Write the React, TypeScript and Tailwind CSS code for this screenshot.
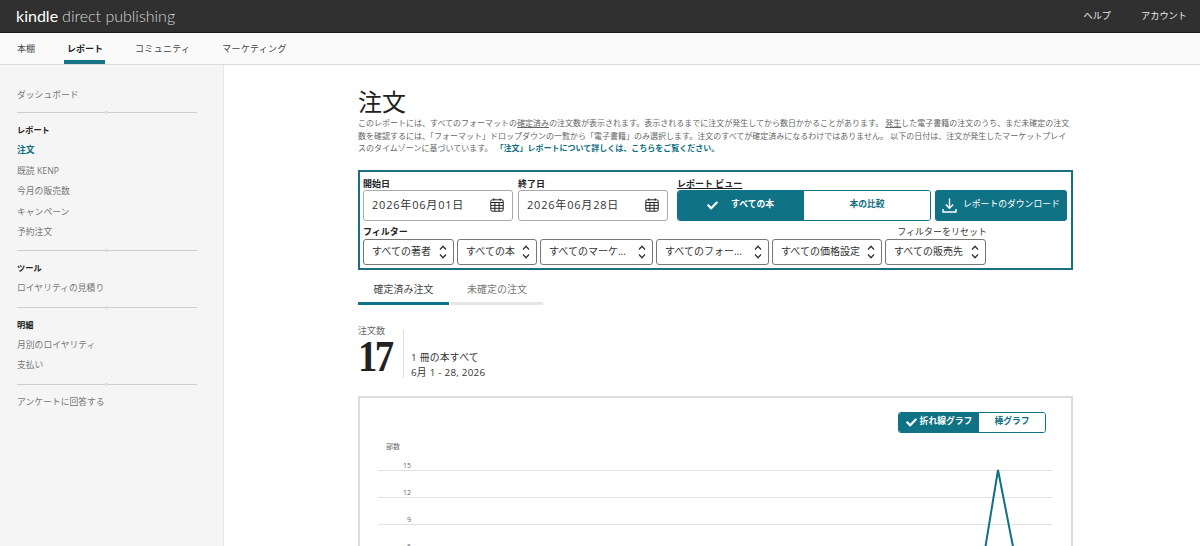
import { FaCheck } from "react-icons/fa";

const FONT = "font-['Open_Sans','Noto_Sans_CJK_JP',sans-serif]";

function SideDivider() {
  return (
    <div className="relative h-px w-[180px] bg-[#cfcfcf]">
      <span className="absolute left-[88px] top-[-1px] h-[3px] w-[3px] rounded-full border border-[#cfcfcf] bg-[#f5f5f5]" />
    </div>
  );
}

function SideHead({ children }: { children: string }) {
  return <div className="h-[20px] text-[8.2px] leading-[20px] font-bold text-[#222]">{children}</div>;
}

function SideItem({ label, active }: { label: string; active?: boolean }) {
  return (
    <div className={`h-[20.4px] text-[8.8px] leading-[20px] ${active ? "font-bold text-[#0f6f80]" : "text-[#777]"}`}>
      {label}
    </div>
  );
}

function Sidebar() {
  return (
    <aside className="w-[224px] shrink-0 border-r border-[#e6e6e6] bg-[#f5f5f5] pl-[17px] pt-[19px]">
      <div className="pt-[1px]"><SideItem label="ダッシュボード" /></div>
      <div className="mt-[7px] mb-[7px]"><SideDivider /></div>
      <SideHead>レポート</SideHead>
      <SideItem label="注文" active />
      <SideItem label="既読 KENP" />
      <SideItem label="今月の販売数" />
      <SideItem label="キャンペーン" />
      <SideItem label="予約注文" />
      <div className="mt-[8px] mb-[7px]"><SideDivider /></div>
      <SideHead>ツール</SideHead>
      <SideItem label="ロイヤリティの見積り" />
      <div className="mt-[8px] mb-[7px]"><SideDivider /></div>
      <SideHead>明細</SideHead>
      <SideItem label="月別のロイヤリティ" />
      <SideItem label="支払い" />
      <div className="mt-[8px] mb-[7px]"><SideDivider /></div>
      <SideItem label="アンケートに回答する" />
    </aside>
  );
}

function CalendarIcon() {
  return (
    <svg width="14" height="14" viewBox="0 0 14 14" fill="none" stroke="#222" strokeWidth="1" className="shrink-0">
      <rect x="0.8" y="1.8" width="12.4" height="11.4" rx="1.5" />
      <path d="M0.8 4.5h12.4M0.8 7.4h12.4M0.8 10.3h12.4M4.9 4.5v8.7M9.1 4.5v8.7" />
      <path d="M3.8 0.5v2M10.2 0.5v2" strokeWidth="1.3" />
    </svg>
  );
}

function UpDownIcon() {
  return (
    <svg width="8" height="14" viewBox="0 0 8 14" fill="none" stroke="#333" strokeWidth="1.3" className="shrink-0">
      <path d="M1 4.5 L4 1.2 L7 4.5" />
      <path d="M1 9.5 L4 12.8 L7 9.5" />
    </svg>
  );
}

function DownloadIcon() {
  return (
    <svg width="15" height="15" viewBox="0 0 15 15" fill="none" stroke="#fff" strokeWidth="1.4" className="shrink-0">
      <path d="M7.5 0.5V10M3.8 6.5 L7.5 10.2 L11.2 6.5" />
      <path d="M1 11v3h13v-3" />
    </svg>
  );
}

function DateField({ label, value }: { label: string; value: string }) {
  return (
    <div className="w-[150px]">
      <div className="h-[13px] text-[9px] leading-[13px] font-bold text-[#222]">{label}</div>
      <div className="flex h-[31px] items-center justify-between rounded-[3px] border border-[#a9a9a9] bg-white pl-[8px] pr-[8px]">
        <span className="text-[11px] tracking-[0.8px] text-[#333]">{value}</span>
        <CalendarIcon />
      </div>
    </div>
  );
}

function FilterSelect({ label, width }: { label: string; width: string }) {
  return (
    <div className={`flex h-[26px] items-center justify-between rounded-[3px] border border-[#777] bg-white pl-[8px] pr-[6px] ${width}`}>
      <span className="whitespace-nowrap text-[10px] text-[#333]">{label}</span>
      <UpDownIcon />
    </div>
  );
}

function ReportControls() {
  return (
    <div className="mt-[15px] h-[100px] w-[715px] border-2 border-[#1a6f85] pl-[3px] pt-[5px]">
      <div className="flex h-[47px]">
        <DateField label="開始日" value="2026年06月01日" />
        <div className="ml-[5px]"><DateField label="終了日" value="2026年06月28日" /></div>
        <div className="ml-[9px] w-[254px]">
          <div className="h-[13px] text-[9px] leading-[13px] font-bold text-[#222] underline">レポート ビュー</div>
          <div className="flex h-[31px] overflow-hidden rounded-[3px] border border-[#0f7285]">
            <div className="flex w-[126px] items-center bg-[#0f7285] pl-[29px] text-white">
              <FaCheck size={11} />
              <span className="ml-[13px] text-[8.8px] font-bold">すべての本</span>
            </div>
            <div className="flex flex-1 items-center justify-center bg-white text-[8.8px] font-bold text-[#0f6f80]">本の比較</div>
          </div>
        </div>
        <div className="ml-[4px] mt-[13px] flex h-[31px] w-[132px] items-center rounded-[3px] bg-[#0f7285] pl-[7px] text-white">
          <DownloadIcon />
          <span className="ml-[6px] text-[8.8px]">レポートのダウンロード</span>
        </div>
      </div>
      <div className="mt-[2px] flex h-[12px] w-[624px] items-center justify-between text-[9px] leading-[12px]">
        <span className="font-bold text-[#222]">フィルター</span>
        <span className="text-[#333]">フィルターをリセット</span>
      </div>
      <div className="mt-[1px] flex gap-[3px]">
        <FilterSelect label="すべての著者" width="w-[91px]" />
        <FilterSelect label="すべての本" width="w-[80px]" />
        <FilterSelect label="すべてのマーケ..." width="w-[113px]" />
        <FilterSelect label="すべてのフォー..." width="w-[113px]" />
        <FilterSelect label="すべての価格設定" width="w-[110px]" />
        <FilterSelect label="すべての販売先" width="w-[101px]" />
      </div>
    </div>
  );
}

function GridRow({ value }: { value: string }) {
  return (
    <div className="h-[27.2px] border-b border-[#e2e2e2] pt-[17px] pr-[641px] text-right text-[7px] leading-[10px] text-[#666]">
      {value}
    </div>
  );
}

function Chart() {
  return (
    <div className="relative mt-[18px] h-[200px] w-[715px] border-2 border-[#dcdcdc] bg-white">
      <div className="flex justify-end pr-[25px] pt-[14px]">
        <div className="flex h-[21px] w-[148px] overflow-hidden rounded-[3px] border border-[#0f7285] text-[8.8px] font-bold">
          <div className="flex w-[80px] items-center justify-center gap-[3px] bg-[#0f7285] text-white">
            <FaCheck size={11} />
            <span>折れ線グラフ</span>
          </div>
          <div className="flex flex-1 items-center justify-center bg-white text-[#0f6f80]">棒グラフ</div>
        </div>
      </div>
      <div className="pl-[26px] pt-[9px] text-[7px] leading-[10px] text-[#666]">部数</div>
      <div className="ml-[18px] mr-[19px] mt-[-8px]">
        <GridRow value="15" />
        <GridRow value="12" />
        <GridRow value="9" />
        <GridRow value="6" />
      </div>
      <svg className="absolute left-[610px] top-[70px] overflow-visible" width="50" height="90" fill="none">
        <path d="M15.4 79 L28 2 L43.1 79" stroke="#0f6f85" strokeWidth="2" />
      </svg>
    </div>
  );
}

export default function App() {
  return (
    <div className={`flex h-screen flex-col overflow-hidden bg-white ${FONT}`}>
      <header className="flex h-[33px] shrink-0 items-center justify-between border-b border-[#1c1c1c] bg-[#303030] pl-[16px] pr-[13px] text-white">
        <div className="flex items-baseline pb-[1px] text-[16px] leading-none font-['Lato',sans-serif]">
          <span className="font-normal">kindle</span>
          <span className="ml-[4px] font-light text-[#d8d8d8]">direct publishing</span>
        </div>
        <div className="flex gap-[30px] text-[9.2px] text-[#eee]">
          <span>ヘルプ</span>
          <span>アカウント</span>
        </div>
      </header>
      <nav className="flex h-[32px] shrink-0 border-b border-[#dcdcdc] bg-[#fafafa] pl-[17px] text-[9px] text-[#444]">
        <div className="flex h-[31px] items-center">本棚</div>
        <div className="relative ml-[32px] flex h-[31px] items-center font-bold text-[#222]">
          レポート
          <span className="absolute bottom-0 left-[-3px] h-[4px] w-[41px] bg-[#1a7385]" />
        </div>
        <div className="ml-[32px] flex h-[31px] items-center tracking-[0.3px]">コミュニティ</div>
        <div className="ml-[32px] flex h-[31px] items-center tracking-[0.3px]">マーケティング</div>
      </nav>
      <div className="flex min-h-0 flex-1">
        <Sidebar />
        <main className="flex-1 pl-[134px] pt-[22px]">
          <h1 className="h-[29px] text-[24px] leading-[29px] font-normal text-[#222]">注文</h1>
          <p className="mt-[1px] w-[712px] text-[8px] leading-[12.5px] text-[#666]">
            このレポートには、すべてのフォーマットの<span className="underline">確定済み</span>の注文数が表示されます。表示されるまでに注文が発生してから数日かかることがあります。 <span className="underline">発生</span>した電子書籍の注文のうち、まだ未確定の注文数を確認するには、「フォーマット」ドロップダウンの一覧から「電子書籍」のみ選択します。注文のすべてが確定済みになるわけではありません。 以下の日付は、注文が発生したマーケットプレイスのタイムゾーンに基づいています。
            <span className="ml-[3px] font-bold text-[#0f6f80]">「注文」レポートについて詳しくは、こちらをご覧ください。</span>
          </p>
          <ReportControls />
          <div className="mt-[9px] flex h-[26px] w-[185px] text-[10px] leading-[21px]">
            <div className="w-[91px] border-b-[3px] border-[#0f7285] text-center text-[#444]">確定済み注文</div>
            <div className="ml-[2px] flex-1 border-b-[3px] border-[#e6e6e6] text-center text-[#777]">未確定の注文</div>
          </div>
          <div className="mt-[19px] flex h-[54px]">
            <div className="w-[45px]">
              <div className="text-[9px] leading-[13px] text-[#666]">注文数</div>
              <div className="origin-left scale-x-[0.88] pt-[1px] font-['Liberation_Serif',serif] text-[44px] leading-[38px] font-bold tracking-[-3px] text-[#222]">17</div>
            </div>
            <div className="mt-[6px] h-[48px] w-px bg-[#ddd]" />
            <div className="ml-[7px] pt-[26px] text-[9.8px] leading-[15px] tracking-[0.25px] text-[#333]">
              <div>1 冊の本すべて</div>
              <div>6月 1 - 28, 2026</div>
            </div>
          </div>
          <Chart />
        </main>
      </div>
    </div>
  );
}
